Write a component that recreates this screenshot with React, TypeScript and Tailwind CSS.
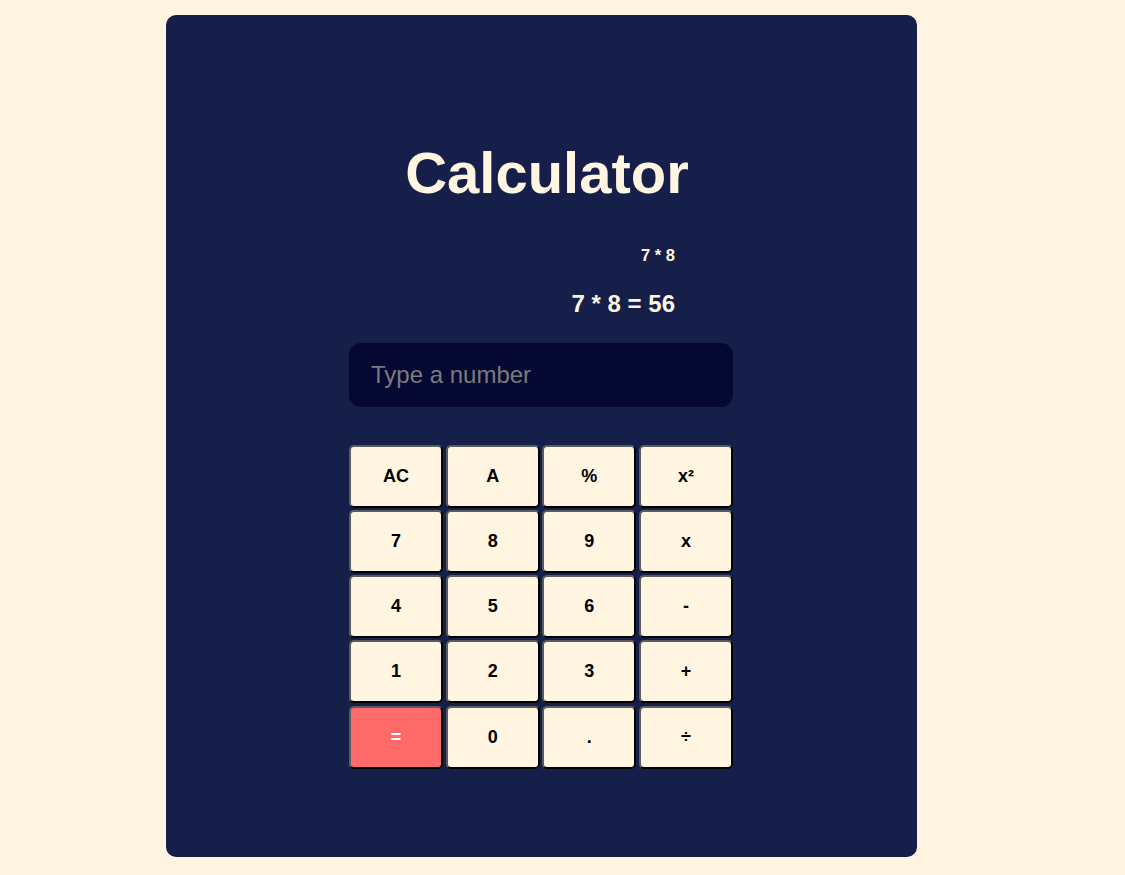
import React from "react";

const keys: { label: string; red?: boolean }[] = [
  { label: "AC" }, { label: "A" }, { label: "%" }, { label: "x²" },
  { label: "7" }, { label: "8" }, { label: "9" }, { label: "x" },
  { label: "4" }, { label: "5" }, { label: "6" }, { label: "-" },
  { label: "1" }, { label: "2" }, { label: "3" }, { label: "+" },
  { label: "=", red: true }, { label: "0" }, { label: "." }, { label: "÷" },
];

export default function App() {
  return (
    <div
      className="min-h-[875px] w-full bg-[#fff5e1] pt-[15px] pb-[18px]"
      style={{ fontFamily: '"Liberation Sans", Arial, sans-serif' }}
    >
      <div className="ml-[166px] flex h-[842px] w-[751px] flex-col items-center rounded-[10px] bg-[#161f4a] pt-[126px] pr-[1px]">
        <h1 className="pl-[12px] text-[58px] font-bold leading-[1.12] text-[#fff5e1]">
          Calculator
        </h1>
        <div className="mt-[40px] flex w-[384px] flex-col items-end pr-[58px] text-[#fff5e1]">
          <div className="text-[16.5px] font-bold leading-[1.15]">7 * 8</div>
          <div className="mt-[25px] text-[24px] font-bold leading-[1.15]">7 * 8 = 56</div>
        </div>
        <input
          type="text"
          placeholder="Type a number"
          className="mt-[25px] h-[64px] w-[384px] rounded-[12px] bg-[#050833] pl-[22px] text-[24px] text-white outline-none placeholder:text-[#7b7b7b]"
          style={{ fontFamily: '"Liberation Sans", Arial, sans-serif' }}
        />
        <div className="mt-[38px] grid w-[384px] grid-cols-4 gap-x-[2.5px] gap-y-[2.25px]">
          {keys.map((k) => (
            <button
              key={k.label}
              className={`h-[63px] rounded-[5px] border-2 border-solid border-t-[#5c5c5c] border-l-[#5c5c5c] border-b-black border-r-black text-[18px] font-bold ${
                k.red ? "bg-[#ff6b6b] text-white" : "bg-[#fff5e1] text-black"
              }`}
              style={{ fontFamily: '"Liberation Sans", Arial, sans-serif' }}
            >
              {k.label}
            </button>
          ))}
        </div>
      </div>
    </div>
  );
}
